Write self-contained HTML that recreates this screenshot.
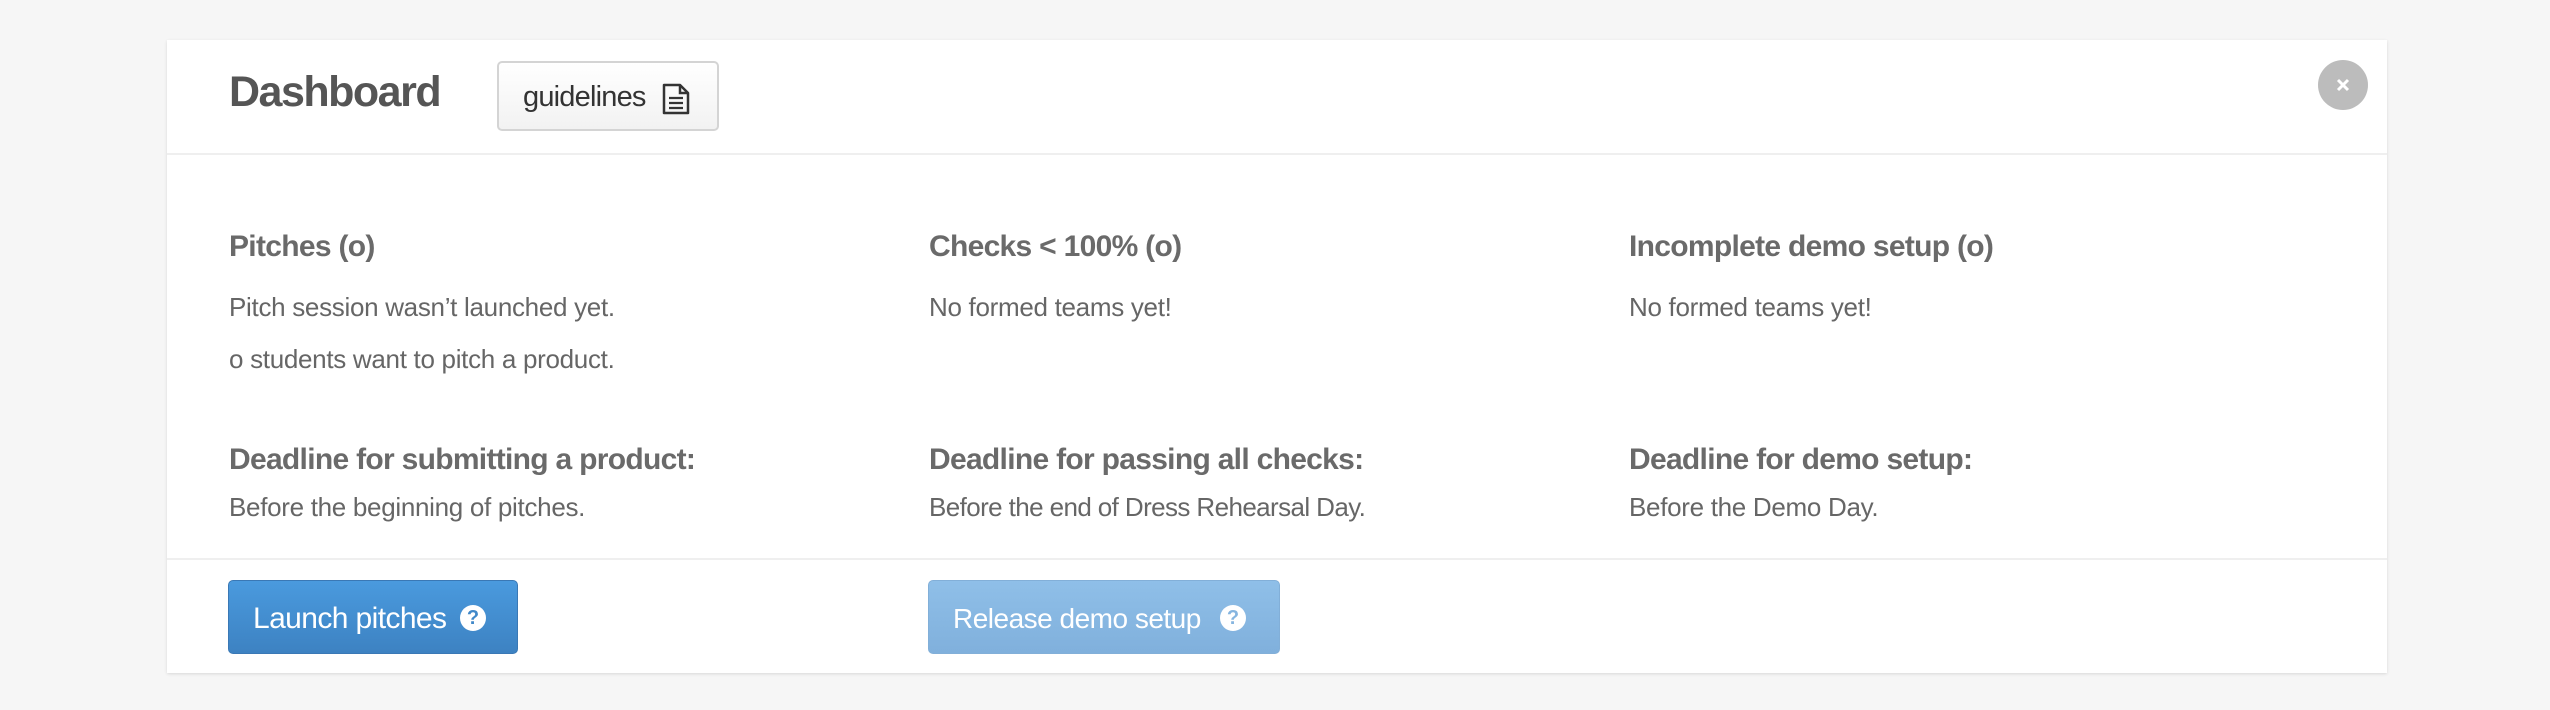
<!DOCTYPE html>
<html><head><meta charset="utf-8">
<style>
html,body{margin:0;padding:0;}
body{width:2550px;height:710px;background:#f6f6f6;position:relative;overflow:hidden;font-family:"Liberation Sans",sans-serif;}
.card{position:absolute;left:167px;top:40px;width:2220px;height:633px;background:#fff;box-shadow:0 1px 3px rgba(0,0,0,0.12);}
.abs{position:absolute;white-space:nowrap;}
.title{left:62px;top:32px;font-size:43px;font-weight:bold;color:#555;letter-spacing:-1.5px;line-height:40px;}
.gbtn{left:330px;top:21px;width:222px;height:70px;box-sizing:border-box;border:2px solid #d4d4d4;border-radius:5px;background:linear-gradient(#fff,#f2f2f2);}
.gbtn span{position:absolute;left:24px;top:18px;font-size:29px;color:#333;letter-spacing:-0.8px;}
.gbtn svg{position:absolute;left:163px;top:20px;}
.close{left:2151px;top:20px;width:50px;height:50px;border-radius:50%;background:#bcbcbc;}
.div{position:absolute;left:0;width:100%;height:2px;background:#efefef;}
h3{position:absolute;margin:0;font-size:30px;font-weight:bold;color:#6a6a6a;letter-spacing:-0.7px;white-space:nowrap;line-height:30px;}
p{position:absolute;margin:0;font-size:26px;color:#666;letter-spacing:-0.3px;white-space:nowrap;line-height:26px;}
.btn{position:absolute;top:540px;height:74px;box-sizing:border-box;border-radius:5px;color:#fff;font-size:30px;letter-spacing:-0.6px;}
.btn span{position:absolute;left:24px;top:21px;}
.btn i{position:absolute;top:24px;width:26px;height:26px;border-radius:50%;background:#fff;font-style:normal;font-weight:bold;font-size:20px;text-align:center;line-height:26px;letter-spacing:0;}
</style></head><body>
<div class="card">
  <div class="abs title">Dashboard</div>
  <div class="abs gbtn"><span>guidelines</span>
    <svg width="28" height="32" viewBox="0 0 28 32"><path d="M2 2 H18 L26 10 V30 H2 Z" fill="none" stroke="#333" stroke-width="2.5" stroke-linejoin="round"/><path d="M18 2 V10 H26" fill="none" stroke="#333" stroke-width="2.5"/><path d="M7 15 H21 M7 20 H21 M7 25 H21" stroke="#333" stroke-width="2.2"/></svg>
  </div>
  <div class="abs close"><svg width="50" height="50" viewBox="0 0 50 50"><path d="M20 20 L30 30 M30 20 L20 30" stroke="#fff" stroke-width="3"/></svg></div>
  <div class="div" style="top:113px"></div>

  <h3 style="left:62px;top:192px">Pitches (o)</h3>
  <p style="left:62px;top:254px">Pitch session wasn’t launched yet.</p>
  <p style="left:62px;top:306px">o students want to pitch a product.</p>
  <h3 style="left:762px;top:192px">Checks &lt; 100% (o)</h3>
  <p style="left:762px;top:254px">No formed teams yet!</p>
  <h3 style="left:1462px;top:192px">Incomplete demo setup (o)</h3>
  <p style="left:1462px;top:254px">No formed teams yet!</p>

  <h3 style="left:62px;top:405px">Deadline for submitting a product:</h3>
  <p style="left:62px;top:454px">Before the beginning of pitches.</p>
  <h3 style="left:762px;top:405px">Deadline for passing all checks:</h3>
  <p style="left:762px;top:454px;letter-spacing:-0.6px">Before the end of Dress Rehearsal Day.</p>
  <h3 style="left:1462px;top:405px">Deadline for demo setup:</h3>
  <p style="left:1462px;top:454px">Before the Demo Day.</p>

  <div class="div" style="top:518px"></div>
  <div class="btn" style="left:61px;width:290px;background:linear-gradient(#4a9ade,#3d82c2);border:1px solid #3a78b5;"><span>Launch pitches</span><i style="left:231px;color:#4088c9">?</i></div>
  <div class="btn" style="left:761px;width:352px;background:linear-gradient(#8fbfe8,#80b0dc);border:1px solid #82afd8;"><span style="font-size:28px;letter-spacing:-0.5px;top:22px">Release demo setup</span><i style="left:291px;color:#86b5e0">?</i></div>
</div>
</body></html>
